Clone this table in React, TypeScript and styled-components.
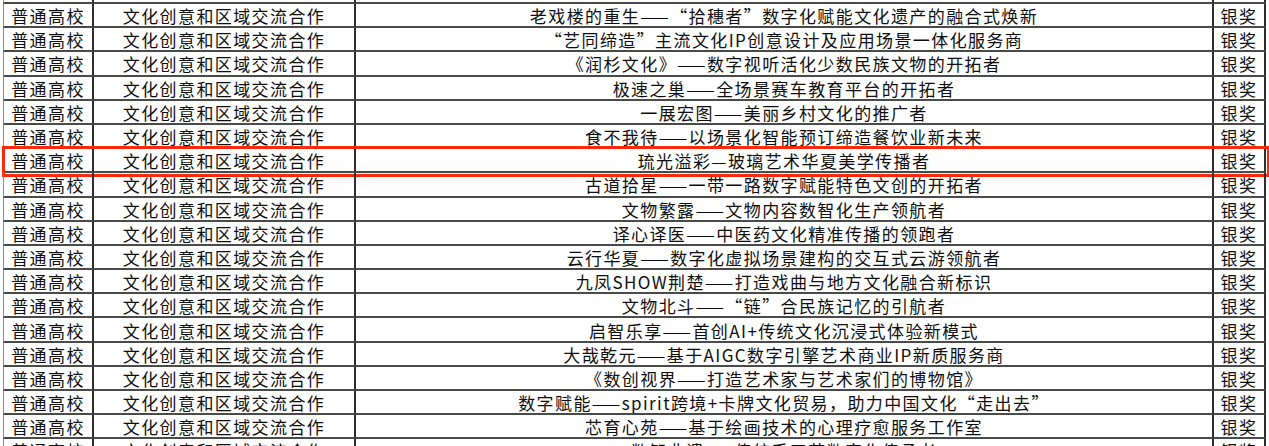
import React from "react";
import styled, { createGlobalStyle, css } from "styled-components";

const Global = createGlobalStyle`
  html, body { margin: 0; padding: 0; background: #ffffff; }
  body { font-family: "Noto Sans CJK SC", "Noto Sans", sans-serif; }
`;

const Viewport = styled.div`
  width: 1269px;
  height: 446px;
  overflow: hidden;
  background: #ffffff;
`;

const Sheet = styled.div`
  margin-top: -20.2px;
  margin-left: 3px;
  display: flex;
  flex-direction: column;
`;

const Row = styled.div<{ $highlight?: boolean }>`
  display: grid;
  grid-template-columns: 91px 262px 858px 52px;
  height: 24.2px;
  position: relative;
  ${(p) =>
    p.$highlight &&
    css`
      &::after {
        content: "";
        position: absolute;
        left: -1px;
        right: -1px;
        top: -3px;
        bottom: -4px;
        border: 3px solid #fb2a0c;
        pointer-events: none;
      }
    `}
`;

const Cell = styled.div<{ $first?: boolean }>`
  box-sizing: border-box;
  display: flex;
  align-items: center;
  justify-content: center;
  white-space: nowrap;
  overflow: hidden;
  border-right: 2px solid #2e2e2e;
  border-bottom: 2px solid #4a4a4a;
  ${(p) => p.$first && css`border-left: 1px solid #8a8a8a;`}
  font-family: "Noto Sans CJK SC", "Noto Sans", sans-serif;
  font-size: 17px;
  letter-spacing: 1.4px;
  line-height: 1;
  color: #0e0e0e;
  padding-top: 1px;
`;

type Entry = { school: string; track: string; title: string; award: string };

const titles: string[] = [
  "老戏楼的重生——“拾穗者”数字化赋能文化遗产的融合式焕新",
  "“艺同缔造”主流文化IP创意设计及应用场景一体化服务商",
  "《润杉文化》——数字视听活化少数民族文物的开拓者",
  "极速之巢——全场景赛车教育平台的开拓者",
  "一展宏图——美丽乡村文化的推广者",
  "食不我待——以场景化智能预订缔造餐饮业新未来",
  "琉光溢彩—玻璃艺术华夏美学传播者",
  "古道拾星——一带一路数字赋能特色文创的开拓者",
  "文物繁露——文物内容数智化生产领航者",
  "译心译医——中医药文化精准传播的领跑者",
  "云行华夏——数字化虚拟场景建构的交互式云游领航者",
  "九凤SHOW荆楚——打造戏曲与地方文化融合新标识",
  "文物北斗——“链”合民族记忆的引航者",
  "启智乐享——首创AI+传统文化沉浸式体验新模式",
  "大哉乾元——基于AIGC数字引擎艺术商业IP新质服务商",
  "《数创视界——打造艺术家与艺术家们的博物馆》",
  "数字赋能——spirit跨境+卡牌文化贸易，助力中国文化“走出去”",
  "芯育心苑——基于绘画技术的心理疗愈服务工作室",
  "数智非遗——传统手工艺数字化传承者",
];

const rows: Entry[] = [
  { school: "", track: "", title: "", award: "" },
  ...titles.map((t) => ({
    school: "普通高校",
    track: "文化创意和区域交流合作",
    title: t,
    award: "银奖",
  })),
];

const HIGHLIGHT = 7;

export default function App() {
  return (
    <Viewport>
      <Global />
      <Sheet>
        {rows.map((r, i) => (
          <Row key={i} $highlight={i === HIGHLIGHT}>
            <Cell $first>{r.school}</Cell>
            <Cell>{r.track}</Cell>
            <Cell>{r.title}</Cell>
            <Cell>{r.award}</Cell>
          </Row>
        ))}
      </Sheet>
    </Viewport>
  );
}
